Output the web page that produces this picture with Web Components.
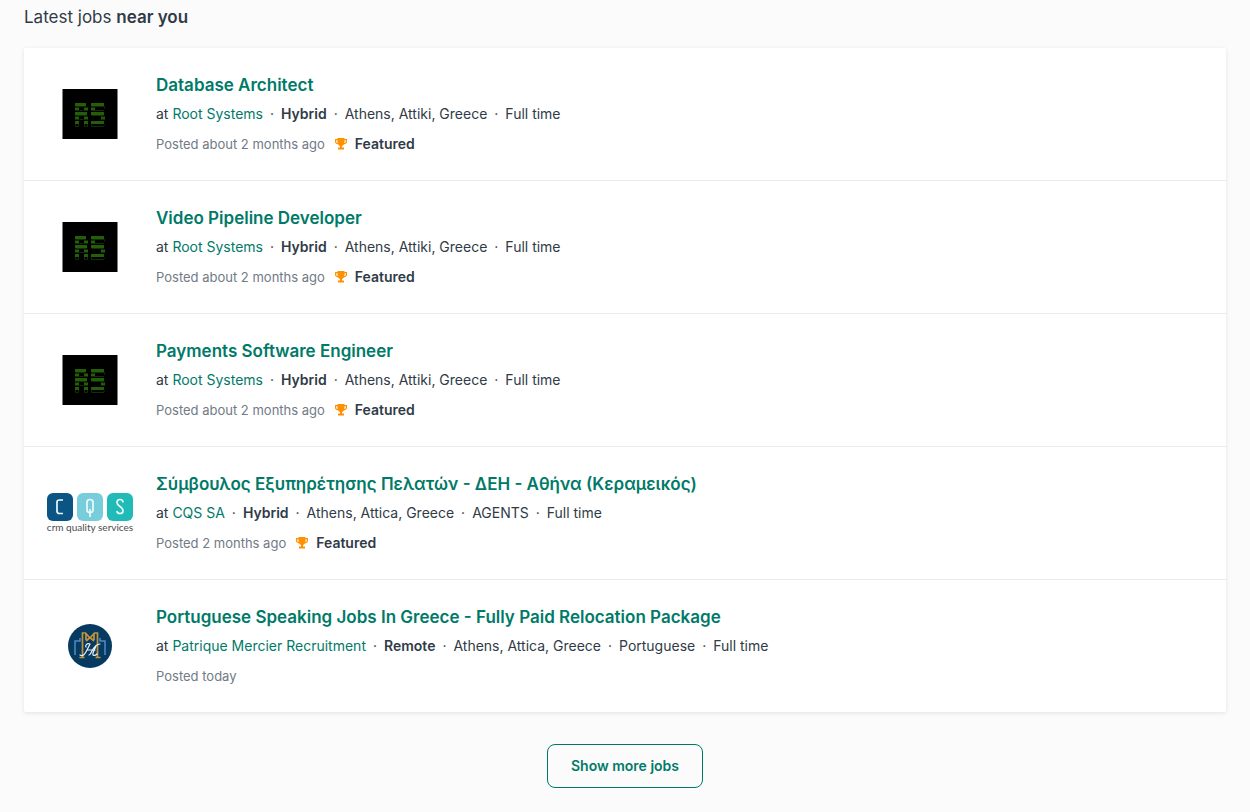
<!DOCTYPE html>
<html lang="en">
<head>
<meta charset="utf-8">
<meta name="viewport" content="width=device-width, initial-scale=1">
<title>Latest jobs near you</title>
<style>
  body { margin: 0; background: #fbfbfb; color: #303b47; font-family: Inter, "Liberation Sans", sans-serif; font-size: 14px; line-height: 24px; }
  strong { font-weight: 600; }
</style>
</head>
<body>
<job-board>
  <span slot="heading">Latest jobs <strong>near you</strong></span>
  <job-card mode="Hybrid" posted="Posted about 2 months ago" featured details="Athens, Attiki, Greece|Full time" company="Root Systems">
    <root-logo slot="logo"></root-logo>Database Architect</job-card>
  <job-card mode="Hybrid" posted="Posted about 2 months ago" featured details="Athens, Attiki, Greece|Full time" company="Root Systems">
    <root-logo slot="logo"></root-logo>Video Pipeline Developer</job-card>
  <job-card mode="Hybrid" posted="Posted about 2 months ago" featured details="Athens, Attiki, Greece|Full time" company="Root Systems">
    <root-logo slot="logo"></root-logo>Payments Software Engineer</job-card>
  <job-card mode="Hybrid" posted="Posted 2 months ago" featured details="Athens, Attica, Greece|AGENTS|Full time" company="CQS SA">
    <cqs-logo slot="logo"></cqs-logo>Σύμβουλος Εξυπηρέτησης Πελατών - ΔΕΗ - Αθήνα (Κεραμεικός)</job-card>
  <job-card mode="Remote" posted="Posted today" details="Athens, Attica, Greece|Portuguese|Full time" company="Patrique Mercier Recruitment">
    <mercier-logo slot="logo"></mercier-logo>Portuguese Speaking Jobs In Greece - Fully Paid Relocation Package</job-card>
  <more-button slot="footer">Show more jobs</more-button>
</job-board>

<script>
  class BaseElement extends HTMLElement {
    connectedCallback() {
      if (!this.shadowRoot) this.attachShadow({ mode: 'open' }).innerHTML = this.render();
    }
  }

  customElements.define('job-board', class extends BaseElement {
    render() {
      return `<style>
        :host { display: block; padding: 4px 24px 24px; }
        h2 { margin: 0 0 18px; font-size: 17px; line-height: 26px; font-weight: 400; }
        .list { background: #fff; border-radius: 2px; box-shadow: 0 1px 4px rgba(0, 0, 0, .1); }
        ::slotted(job-card:not(:last-of-type)) { border-bottom: 1px solid #e8ebee; }
        footer { display: flex; justify-content: center; padding-top: 32px; }
      </style>
      <h2><slot name="heading"></slot></h2>
      <div class="list"><slot></slot></div>
      <footer><slot name="footer"></slot></footer>`;
    }
  });

  customElements.define('job-card', class extends BaseElement {
    render() {
      const dot = '<span class="dot">·</span>';
      const details = this.getAttribute('details').split('|').map(d => `${dot}<span>${d}</span>`).join('');
      const badge = this.hasAttribute('featured') ? '<trophy-icon></trophy-icon><strong>Featured</strong>' : '';
      return `<style>
        :host { display: grid; grid-template-columns: 132px 1fr; align-items: center; }
        .logo { display: flex; justify-content: center; }
        .body { padding: 24px 24px 24px 0; }
        h3 { margin: 0 0 4px; font-size: 17px; line-height: 26px; font-weight: 600; }
        a { color: #007a68; text-decoration: none; }
        strong { font-weight: 600; }
        .meta, .posted { display: flex; flex-wrap: wrap; align-items: center; }
        .meta { margin-bottom: 6px; }
        .dot { width: 18px; text-align: center; }
        .posted { font-size: 13px; color: #717a86; }
        .posted strong { font-size: 14px; color: #303b47; }
        trophy-icon { margin: 0 8px 0 10px; }
      </style>
      <div class="logo"><slot name="logo"></slot></div>
      <div class="body">
        <h3><a href="#"><slot></slot></a></h3>
        <div class="meta"><span>at <a href="#">${this.getAttribute('company')}</a></span>${dot}<strong>${this.getAttribute('mode')}</strong>${details}</div>
        <div class="posted"><span>${this.getAttribute('posted')}</span>${badge}</div>
      </div>`;
    }
  });

  customElements.define('trophy-icon', class extends BaseElement {
    render() {
      return `<style>:host, svg { display: block; }</style>
      <svg width="12" height="12" viewBox="0 0 12 12" aria-hidden="true">
        <path fill="#ff9100" fill-rule="evenodd" d="M2.5 0h7v1H12v2.500C12 5.300 10.600 6.200 8.800 6.400 8.300 7.100 7.600 7.600 7 7.900V9.500h2V11.500H3V9.500h2V7.900c-.6-.3-1.300-.8-1.800-1.500C1.400 6.200 0 5.300 0 3.500V1h2.500zM1.200 2.200v1.200c0 .9.7 1.400 1.500 1.700-.2-.8-.3-1.800-.3-2.900zM9.600 2.200c0 1.100-.1 2.100-.3 2.900.8-.3 1.500-.8 1.500-1.700V2.200z"/>
      </svg>`;
    }
  });

  customElements.define('root-logo', class extends BaseElement {
    render() {
      return `<style>:host, svg { display: block; }</style>
      <svg width="56" height="50" viewBox="0 0 56 50" role="img" aria-label="Root Systems">
        <path fill="#000" d="M.5 0h55v50H.5z"/>
        <g fill="#255e08">
          <path d="M13 14h11v3H13zM13 18.500h4v3h-4zM22 18.500h4v3h-4zM13 23h12v3H13zM13 27.500h4v3h-4zM22 27.500h4v3h-4zM13 32h4v3h-4zM22 32h4v3h-4z"/>
          <path d="M29 14h13v3H29zM29 18.500h4v3h-4zM29 23h13v3H29zM39 27.500h4v3h-4zM29 32h13v3H29z"/>
        </g>
        <path fill="none" stroke="#122e06" d="M13.500 17.500h10M17.500 21.500h4M13.500 26.500h11M17.500 30.500h4M13.500 35v2.500h3V35M22.500 35v2.500h3V35M29.500 17.500h13v2M33 21.500h9M29.500 26.500h12v2M29.500 35.500v2h12l1-2"/>
      </svg>`;
    }
  });

  customElements.define('cqs-logo', class extends BaseElement {
    render() {
      return `<style>:host, svg { display: block; } text { text-anchor: middle; }</style>
      <svg width="88" height="44" viewBox="0 0 88 44" role="img" aria-label="CQS crm quality services">
        <rect x="1" y="2" width="26" height="28" rx="6" fill="#0c5484"/>
        <rect x="31" y="2" width="26" height="28" rx="6" fill="#77cdd9"/>
        <rect x="61" y="2" width="26" height="28" rx="6" fill="#20bbb7"/>
        <g fill="none" stroke="#edfafa" stroke-width="1.700">
          <path d="M17 9h-3.500q-2.500 0-2.500 2v9q0 2.500 2.500 2.500H17"/>
          <path d="M41 11q0-2.500 3-2.500t3 2.500v8q0 2.500-3 2.500T41 19zM44 18v8"/>
          <path d="M77 11.500q0-3-3-3t-3 3q0 2 3 4t3 4.500q0 2.500-3 2.500t-3-2.500"/>
        </g>
        <text x="44" y="40" font-family="Lato, sans-serif" font-size="10" fill="#4b4b4b">crm quality services</text>
      </svg>`;
    }
  });

  customElements.define('mercier-logo', class extends BaseElement {
    render() {
      return `<style>:host, svg { display: block; }</style>
      <svg width="44" height="44" viewBox="0 0 44 44" role="img" aria-label="Patrique Mercier Recruitment">
        <circle cx="22" cy="22" r="22" fill="#073a60"/>
        <path fill="none" stroke="#4d8cc4" stroke-width="1.500" d="M12 14v3H7v14M32 14v3h5v14"/>
        <path fill="none" stroke="#c1943b" stroke-width="1.700" d="M11.500 33.500h5M14.500 33.500V9h3l4.500 5 4.500-5h3v24.500M27.500 33.500h5M18 9v7M26 9v7M18 17l4-3.500 4 3.500"/>
        <path fill="none" stroke="#e9f1f7" stroke-width="1.200" stroke-linecap="round" d="M12 31c3 2 5-1 7-5l3-6c-3-1-5 1-4 3M21 31c1 0 2-2 3-4 2-4 4-7 8-7M19 26h8M28 22l-3 7c-1 3 2 3 4 1"/>
      </svg>`;
    }
  });

  customElements.define('more-button', class extends BaseElement {
    render() {
      return `<style>
        :host { display: block; }
        button { display: block; padding: 9px 23px; border: 1px solid #007a68; border-radius: 8px; background: transparent; color: #007a68; font: inherit; font-weight: 600; line-height: 24px; cursor: pointer; }
      </style>
      <button type="button"><slot></slot></button>`;
    }
  });
</script>
</body>
</html>
